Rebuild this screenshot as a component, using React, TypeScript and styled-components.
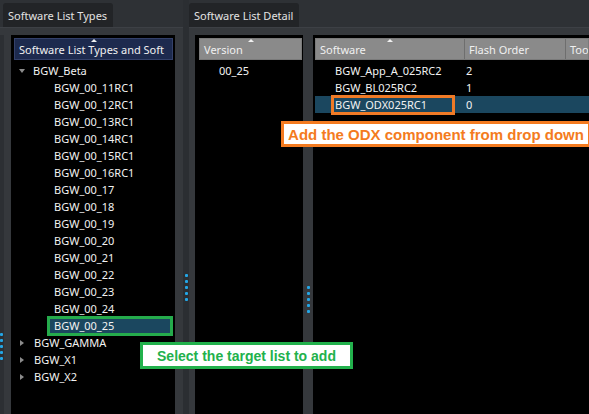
import React from 'react';
import styled, { createGlobalStyle } from 'styled-components';

const Global = createGlobalStyle`
  html, body { margin: 0; padding: 0; background: #2e3135; }
  body { font-family: "Noto Sans", "DejaVu Sans", sans-serif; font-size: 11px; color: #f2f2f2; }
  * { box-sizing: border-box; }
`;

const Screen = styled.div`
  position: relative;
  width: 589px;
  height: 414px;
  display: flex;
  overflow: hidden;
  background: #2e3135;
`;

const Dock = styled.div<{ $w?: number }>`
  display: flex;
  flex-direction: column;
  ${(p) => (p.$w ? `width: ${p.$w}px; flex: none;` : 'flex: 1; min-width: 0;')}
`;

const TabBar = styled.div<{ $pl: number }>`
  height: 27px;
  flex: none;
  display: flex;
  align-items: flex-end;
  padding-left: ${(p) => p.$pl}px;
`;

const Tab = styled.div`
  height: 24px;
  padding: 0 6px 0 5px;
  background: #222427;
  color: #e2e2e2;
  display: flex;
  align-items: center;
  font-size: 11px;
  border-radius: 3px 3px 0 0;
  white-space: nowrap;
`;

const DockBody = styled.div<{ $pl: number; $pr: number }>`
  flex: 1;
  display: flex;
  min-height: 0;
  background: #35383c;
  border-top: 1px solid #3d4045;
  padding: 7px ${(p) => p.$pr}px 0 ${(p) => p.$pl}px;
`;

const Grip = styled.div<{ $w: number; $top: number; $bg: string; $align: string }>`
  width: ${(p) => p.$w}px;
  flex: none;
  display: flex;
  flex-direction: column;
  align-items: ${(p) => p.$align};
  gap: 3px;
  padding-top: ${(p) => p.$top}px;
  background: ${(p) => p.$bg};
`;

const Dot = styled.span`
  width: 3px;
  height: 3px;
  border-radius: 1px;
  background: #23a6e6;
`;

const MidSplit = styled.div`
  width: 6px;
  flex: none;
  display: flex;
  flex-direction: column;
  align-items: center;
  gap: 3px;
  padding-top: 274px;
  background: #2b2e32;
`;

const Pane = styled.div<{ $w?: number; $pl: number; $pr: number }>`
  ${(p) => (p.$w ? `width: ${p.$w}px; flex: none;` : 'flex: 1; min-width: 0;')}
  background: #000;
  display: flex;
  flex-direction: column;
  padding: 3px ${(p) => p.$pr}px 0 ${(p) => p.$pl}px;
  overflow: hidden;
`;

const Header = styled.div<{ $navy?: boolean }>`
  position: relative;
  height: 22px;
  flex: none;
  display: flex;
  background: ${(p) => (p.$navy ? '#1d2a4e' : '#8a8a8a')};
  border: 1px solid ${(p) => (p.$navy ? '#34416a' : '#7a7a7a')};
  color: #f0f0f0;
  font-size: 11px;
`;

const HeadCell = styled.div<{ $w?: number; $last?: boolean }>`
  position: relative;
  ${(p) => (p.$w ? `width: ${p.$w}px; flex: none;` : 'flex: 1; min-width: 0;')}
  display: flex;
  align-items: center;
  padding-left: 4px;
  white-space: nowrap;
  overflow: hidden;
  border-right: ${(p) => (p.$last ? 'none' : '1px solid #6e6e6e')};
`;

const SortArrow = styled.span`
  position: absolute;
  top: 0;
  left: 50%;
  margin-left: -3px;
  width: 0;
  height: 0;
  border-left: 3px solid transparent;
  border-right: 3px solid transparent;
  border-bottom: 3px solid #f0f0f0;
`;

const Tree = styled.div`
  display: flex;
  flex-direction: column;
  padding-top: 2px;
`;

const Row = styled.div<{ $indent: number }>`
  height: 17px;
  display: flex;
  align-items: center;
  padding-left: ${(p) => p.$indent}px;
  white-space: nowrap;
`;

const Twisty = styled.span<{ $open: boolean }>`
  width: 0;
  height: 0;
  ${(p) =>
    p.$open
      ? 'border-left: 3.5px solid transparent; border-right: 3.5px solid transparent; border-top: 4px solid #8c8c8c; margin-right: 8px;'
      : 'border-top: 3.5px solid transparent; border-bottom: 3.5px solid transparent; border-left: 4px solid #8c8c8c; margin-left: 1px; margin-right: 10px;'}
`;

const Selected = styled.div<{ $color: string; $w: number; $ml: number; $pl: number }>`
  height: 20px;
  width: ${(p) => p.$w}px;
  display: flex;
  align-items: center;
  padding-left: ${(p) => p.$pl}px;
  background: #1b475f;
  border: 3px solid ${(p) => p.$color};
  margin-left: ${(p) => p.$ml}px;
`;

const TableRow = styled.div<{ $sel?: boolean }>`
  height: 17px;
  display: flex;
  align-items: center;
  background: ${(p) => (p.$sel ? '#1b475f' : 'transparent')};
  white-space: nowrap;
`;

const Cell = styled.div<{ $w?: number; $pl: number }>`
  ${(p) => (p.$w ? `width: ${p.$w}px; flex: none;` : 'flex: 1; min-width: 0;')}
  padding-left: ${(p) => p.$pl}px;
  display: flex;
  align-items: center;
  height: 100%;
`;

const Callout = styled.div<{ $color: string; $left: number; $top: number; $w: number; $h: number; $fs: number }>`
  position: absolute;
  left: ${(p) => p.$left}px;
  top: ${(p) => p.$top}px;
  width: ${(p) => p.$w}px;
  height: ${(p) => p.$h}px;
  background: #fff;
  border: 3px solid ${(p) => p.$color};
  color: ${(p) => p.$color};
  font-family: "Liberation Sans", Arial, sans-serif;
  font-weight: bold;
  font-size: ${(p) => p.$fs}px;
  display: flex;
  align-items: center;
  justify-content: center;
  white-space: nowrap;
`;

const Dots = () => (
  <>
    {[0, 1, 2, 3, 4].map((i) => (
      <Dot key={i} />
    ))}
  </>
);

const children = [
  'BGW_00_11RC1',
  'BGW_00_12RC1',
  'BGW_00_13RC1',
  'BGW_00_14RC1',
  'BGW_00_15RC1',
  'BGW_00_16RC1',
  'BGW_00_17',
  'BGW_00_18',
  'BGW_00_19',
  'BGW_00_20',
  'BGW_00_21',
  'BGW_00_22',
  'BGW_00_23',
  'BGW_00_24',
];

const software = [
  { name: 'BGW_App_A_025RC2', order: '2' },
  { name: 'BGW_BL025RC2', order: '1' },
];

export default function App() {
  return (
    <>
      <Global />
      <Screen>
        <Dock $w={183}>
          <TabBar $pl={3}>
            <Tab>Software List Types</Tab>
          </TabBar>
          <DockBody $pl={0} $pr={8}>
            <Grip $w={11} $top={298} $bg="linear-gradient(90deg,#2c2f33 0 4px,#35383c 4px)" $align="flex-start">
              <Dots />
            </Grip>
            <Pane $pl={3} $pr={2}>
              <Header $navy>
                <HeadCell $last>
                  Software List Types and Soft
                  <SortArrow />
                </HeadCell>
              </Header>
              <Tree>
                <Row $indent={5}>
                  <Twisty $open />
                  BGW_Beta
                </Row>
                {children.map((c) => (
                  <Row key={c} $indent={40}>
                    {c}
                  </Row>
                ))}
                <Row $indent={40}>
                  <Selected $color="#25ab4c" $w={127} $ml={-7} $pl={4}>
                    BGW_00_25
                  </Selected>
                </Row>
                {['BGW_GAMMA', 'BGW_X1', 'BGW_X2'].map((c) => (
                  <Row key={c} $indent={5}>
                    <Twisty $open={false} />
                    {c}
                  </Row>
                ))}
              </Tree>
            </Pane>
          </DockBody>
        </Dock>
        <MidSplit>
          <Dots />
        </MidSplit>
        <Dock>
          <TabBar $pl={0}>
            <Tab>Software List Detail</Tab>
          </TabBar>
          <DockBody $pl={6} $pr={0}>
            <Pane $w={108} $pl={4} $pr={1}>
              <Header>
                <HeadCell $last>
                  Version
                  <SortArrow />
                </HeadCell>
              </Header>
              <Tree>
                <TableRow>
                  <Cell $pl={20}>00_25</Cell>
                </TableRow>
              </Tree>
            </Pane>
            <Grip $w={10} $top={251} $bg="#35383c" $align="center">
              <Dots />
            </Grip>
            <Pane $pl={2} $pr={0}>
              <Header>
                <HeadCell $w={149}>
                  Software
                  <SortArrow />
                </HeadCell>
                <HeadCell $w={101}>Flash Order</HeadCell>
                <HeadCell $last>Tool Version</HeadCell>
              </Header>
              <Tree>
                {software.map((s) => (
                  <TableRow key={s.name}>
                    <Cell $w={149} $pl={20}>{s.name}</Cell>
                    <Cell $pl={2}>{s.order}</Cell>
                  </TableRow>
                ))}
                <TableRow $sel>
                  <Cell $w={149} $pl={16}>
                    <Selected $color="#f07a26" $w={124} $ml={0} $pl={1}>
                      BGW_ODX025RC1
                    </Selected>
                  </Cell>
                  <Cell $pl={2}>0</Cell>
                </TableRow>
              </Tree>
            </Pane>
          </DockBody>
        </Dock>
        <Callout $color="#f47b20" $left={281} $top={121} $w={310} $h={26} $fs={15}>
          Add the ODX component from drop down
        </Callout>
        <Callout $color="#22b14c" $left={140} $top={342} $w={213} $h={27} $fs={14}>
          Select the target list to add
        </Callout>
      </Screen>
    </>
  );
}
